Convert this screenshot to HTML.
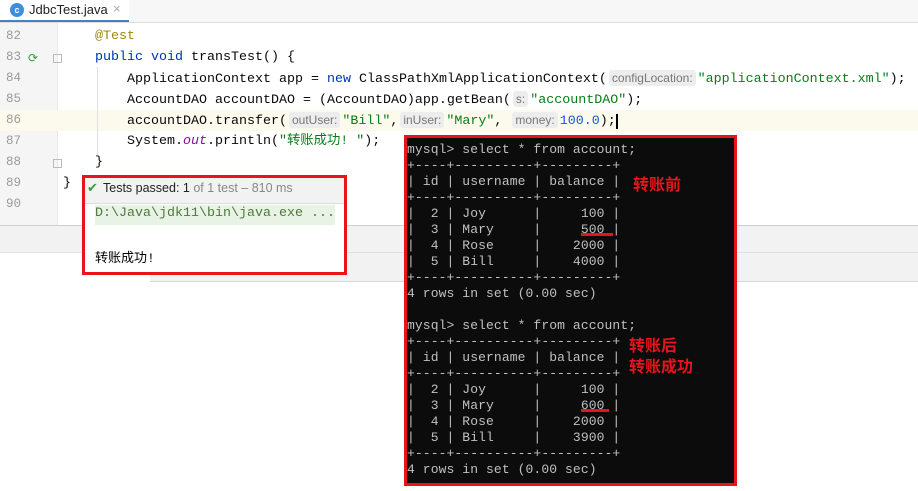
<!DOCTYPE html>
<html><head><meta charset="utf-8"><style>
body{margin:0;width:918px;height:491px;position:relative;overflow:hidden;background:#fff;font-family:"Liberation Mono","Noto Sans CJK SC",monospace}
.a{position:absolute;white-space:pre}
.ln{position:absolute;left:6px;width:30px;color:#9a9a9a;font-size:12.5px}
.code{position:absolute;font-size:13.33px;color:#080808;white-space:pre;line-height:21px}
.kw{color:#0033b3}.str{color:#067d17}.an{color:#9e880d}.num{color:#1750eb}.it{color:#871094;font-style:italic}
.h{font-family:"Liberation Sans",sans-serif;font-size:12px;color:#777;background:#ededed;border-radius:3px;padding:1px 3px;margin:0 2px}
.t{position:absolute;color:#c0c0c0;font-size:13px;line-height:16px;white-space:pre;letter-spacing:0.1px}
.r{position:absolute;color:#e8141c;font-weight:bold;font-size:16px;font-family:"Noto Sans CJK SC",sans-serif}
</style></head><body>
<div class="a" style="left:0;top:0;width:918px;height:22px;background:#f7f7f7;border-bottom:1px solid #ddd"></div>
<div class="a" style="left:0;top:0;width:129px;height:20px;background:#fff;border-bottom:2px solid #4083c9"></div>
<div class="a" style="left:10px;top:3px;width:14px;height:14px;border-radius:50%;background:#3e8ede;color:#fff;font:bold 9px 'Liberation Sans';text-align:center;line-height:14px">c</div>
<div class="a" style="left:29px;top:2px;font:13px 'Liberation Sans',sans-serif;color:#222">JdbcTest.java</div>
<div class="a" style="left:113px;top:1px;font:13px 'Liberation Sans';color:#aaa">×</div>
<div class="a" style="left:0;top:23px;width:57px;height:202px;background:#f5f5f5;border-right:1px solid #e8e8e8"></div>
<div class="a" style="left:0;top:110px;width:918px;height:21px;background:#fcfaed"></div>
<div class="a" style="left:0;top:225px;width:918px;height:1px;background:#d0d0d0"></div>
<div class="a" style="left:0;top:226px;width:918px;height:26px;background:#f2f2f2"></div>
<div class="a" style="left:150px;top:252px;width:768px;height:29px;background:#f2f2f2"></div>
<div class="a" style="left:0;top:252px;width:918px;height:1px;background:#e0e0e0"></div>
<div class="a" style="left:150px;top:281px;width:768px;height:1px;background:#d8d8d8"></div>
<div class="a" style="left:97px;top:67px;width:1px;height:88px;background:#e0e0e0"></div>
<div class="a" style="left:28px;top:51px;color:#3b9a3b;font-size:12px">⟳</div>
<div class="a" style="left:53px;top:54px;width:7px;height:7px;border:1px solid #bbb"></div>
<div class="a" style="left:53px;top:159px;width:7px;height:7px;border:1px solid #bbb"></div>
<div class="ln" style="top:29px">82</div><div class="ln" style="top:50px">83</div><div class="ln" style="top:71px">84</div><div class="ln" style="top:92px">85</div><div class="ln" style="top:113px">86</div><div class="ln" style="top:134px">87</div><div class="ln" style="top:155px">88</div><div class="ln" style="top:176px">89</div><div class="ln" style="top:197px">90</div>
<div class="code" style="left:95px;top:26px"><span class="an">@Test</span></div>
<div class="code" style="left:95px;top:47px"><span class="kw">public void</span> transTest() {</div>
<div class="code" style="left:127px;top:68px">ApplicationContext app = <span class="kw">new</span> ClassPathXmlApplicationContext(<span class="h">configLocation:</span><span class="str">"applicationContext.xml"</span>);</div>
<div class="code" style="left:127px;top:89px">AccountDAO accountDAO = (AccountDAO)app.getBean(<span class="h">s:</span><span class="str">"accountDAO"</span>);</div>
<div class="code" style="left:127px;top:110px">accountDAO.transfer(<span class="h">outUser:</span><span class="str">"Bill"</span>,<span class="h">inUser:</span><span class="str">"Mary"</span>, <span class="h">money:</span><span class="num">100.0</span>);<span style="border-left:2px solid #000"></span></div>
<div class="code" style="left:127px;top:131px">System.<span class="it">out</span>.println(<span class="str">"转账成功! "</span>);</div>
<div class="code" style="left:95px;top:152px">}</div>
<div class="code" style="left:63px;top:173px">}</div>
<div class="a" style="left:82px;top:175px;width:259px;height:94px;border:3px solid #e8141c;background:#fff"></div>
<div class="a" style="left:85px;top:178px;width:259px;height:25px;background:#f2f2f2;border-bottom:1px solid #ddd"></div>
<div class="a" style="left:87px;top:181px;color:#3b9a3b;font:bold 13px 'DejaVu Sans'">✔</div>
<div class="a" style="left:103px;top:181px;font:12.5px 'Liberation Sans',sans-serif;color:#222">Tests passed: 1 <span style="color:#888">of 1 test – 810 ms</span></div>
<div class="a" style="left:95px;top:205px;width:240px;height:20px;background:#e8f2e5"></div>
<div class="a" style="left:95px;top:206px;font-size:13.33px;color:#4d7a3c">D:\Java\jdk11\bin\java.exe ...</div>
<div class="a" style="left:95px;top:247px;font-size:13px;color:#000">转账成功!</div>
<div class="a" style="left:404px;top:135px;width:327px;height:345px;border:3px solid #e8141c;background:#0c0c0c"></div>
<div class="t" style="left:407px;top:142px">mysql&gt; select * from account;
+----+----------+---------+
| id | username | balance |
+----+----------+---------+
|  2 | Joy      |     100 |
|  3 | Mary     |     500 |
|  4 | Rose     |    2000 |
|  5 | Bill     |    4000 |
+----+----------+---------+
4 rows in set (0.00 sec)

mysql&gt; select * from account;
+----+----------+---------+
| id | username | balance |
+----+----------+---------+
|  2 | Joy      |     100 |
|  3 | Mary     |     600 |
|  4 | Rose     |    2000 |
|  5 | Bill     |    3900 |
+----+----------+---------+
4 rows in set (0.00 sec)</div>
<div class="a" style="left:581px;top:233px;width:32px;height:3px;background:#e8141c"></div>
<div class="a" style="left:581px;top:409px;width:28px;height:3px;background:#e8141c"></div>
<div class="r" style="left:633px;top:171px">转账前</div>
<div class="r" style="left:629px;top:332px">转账后</div>
<div class="r" style="left:629px;top:353px">转账成功</div>
</body></html>
